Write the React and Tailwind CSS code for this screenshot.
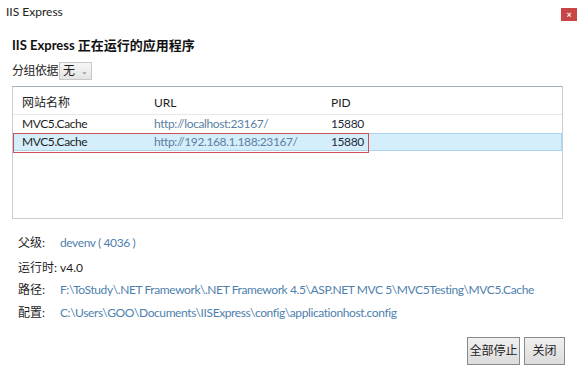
const font = { fontFamily: 'Lato, "Noto Sans CJK SC", sans-serif' }

function Row({ name, url, pid, selected }) {
  return (
    <div
      className={[
        'flex h-[18px] items-center text-[12px] tracking-[-0.4px]',
        selected ? 'border border-[#a9d3ee] bg-[#d5eefb]' : 'border border-transparent',
      ].join(' ')}
    >
      <div className="w-[140px] pl-[8px] text-[#1e1e1e]">{name}</div>
      <div className="w-[177px] text-[#5b7fa3]">{url}</div>
      <div className="text-[#1e2a3a]">{pid}</div>
    </div>
  )
}

function Detail({ label, children, link, className = '' }) {
  return (
    <div className={['flex h-[16px] items-center text-[12px]', className].join(' ')}>
      <div className="w-[42px] text-[#1e1e1e]">{label}</div>
      <div className={link ? 'tracking-[-0.4px] text-[#4f7fae]' : 'text-[#1e1e1e]'}>{children}</div>
    </div>
  )
}

export default function App() {
  return (
    <div className="relative h-[369px] w-[577px] overflow-hidden bg-white" style={font}>
      <div className="flex h-[24px] items-center justify-between pl-[6px]">
        <span className="text-[12px] text-[#222]">IIS Express</span>
        <div className="mt-[5px] flex h-[13px] w-[16px] items-center justify-center bg-[#c94545] text-[9px] font-bold leading-none text-white">
          ×
        </div>
      </div>

      <div className="pl-[12px] pt-[12px] text-[13px] font-bold text-[#111]">IIS Express 正在运行的应用程序</div>

      <div className="mt-[6px] flex items-center pl-[12px] text-[12px] text-[#1e1e1e]">
        <span className="tracking-[-0.5px]">分组依据</span>
        <div className="ml-[1px] flex h-[18px] w-[33px] items-center justify-between border border-[#c8c8c8] bg-gradient-to-b from-[#f6f6f6] to-[#e4e4e4] px-[3px]">
          <span>无</span>
          <span className="text-[8px] text-[#777]">⌄</span>
        </div>
      </div>

      <div className="relative ml-[12px] mt-[6px] h-[133px] w-[551px] border border-[#c7ced6] border-t-[#9fb0c0] bg-white">
        <div className="flex h-[28px] items-center border-b border-[#e8e8e8] pt-[6px] text-[12px] text-[#1e1e1e]">
          <div className="w-[141px] pl-[9px]">网站名称</div>
          <div className="w-[177px]">URL</div>
          <div>PID</div>
        </div>
        <div>
          <Row name="MVC5.Cache" url="http://localhost:23167/" pid="15880" />
          <Row name="MVC5.Cache" url="http://192.168.1.188:23167/" pid="15880" selected />
        </div>
        <div className="absolute left-[0px] top-[46px] h-[20px] w-[356px] border border-[#d0505a]" />
      </div>

      <div className="flex flex-col pl-[18px]">
        <Detail label="父级:" link className="mt-[16px]">devenv ( 4036 )</Detail>
        <Detail label="运行时:" className="mt-[9px]">v4.0</Detail>
        <Detail label="路径:" link className="mt-[6px]">
          F:\ToStudy\.NET Framework\.NET Framework 4.5\ASP.NET MVC 5\MVC5Testing\MVC5.Cache
        </Detail>
        <Detail label="配置:" link className="mt-[7px]">
          C:\Users\GOO\Documents\IISExpress\config\applicationhost.config
        </Detail>
      </div>

      <div className="absolute bottom-[4px] right-[12px] flex gap-[4px]">
        <button className="h-[28px] w-[53px] border border-[#8a8a8a] bg-gradient-to-b from-[#f0f0f0] to-[#dcdcdc] text-[12px] text-[#1e1e1e]">
          全部停止
        </button>
        <button className="h-[28px] w-[41px] border border-[#8a8a8a] bg-gradient-to-b from-[#f0f0f0] to-[#dcdcdc] text-[12px] text-[#1e1e1e]">
          关闭
        </button>
      </div>
    </div>
  )
}
